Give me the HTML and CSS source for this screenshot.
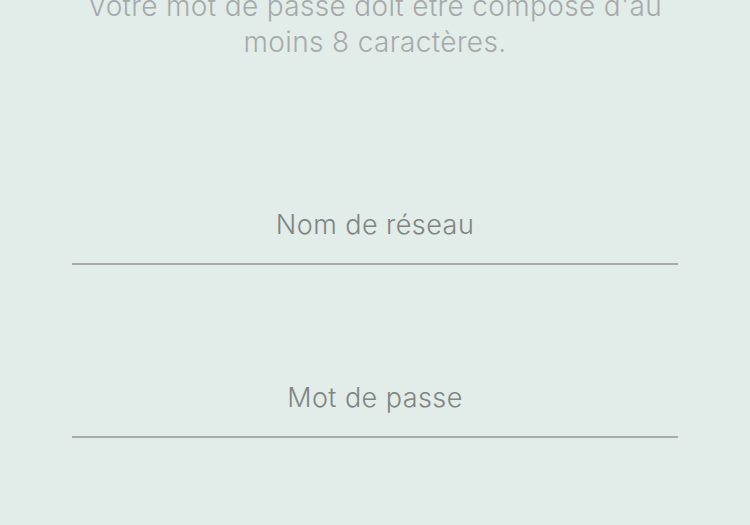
FILE: index.html
```html
<!DOCTYPE html>
<html lang="fr">
<head>
<meta charset="utf-8">
<link rel="stylesheet" href="styles.css">
</head>
<body>
<main class="screen">
  <p class="hint">Votre mot de passe doit être composé d'au moins 8 caractères.</p>
  <div class="field field-first"><span class="label">Nom de réseau</span></div>
  <div class="field"><span class="label">Mot de passe</span></div>
</main>
</body>
</html>
```
FILE: styles.css
```css
html, body {
  margin: 0;
  padding: 0;
  background: #e2ece9;
  height: 100%;
  overflow: hidden;
}
.screen {
  display: flex;
  flex-direction: column;
  padding: 0 72px;
  font-family: Inter, Roboto, "Liberation Sans", sans-serif;
  font-weight: 300;
}
.hint {
  margin: -12px 0 0;
  font-size: 28px;
  letter-spacing: 0.35px;
  line-height: 36px;
  color: #a6aaa9;
  text-align: center;
}
.field {
  display: flex;
  justify-content: center;
  border-bottom: 2px solid #a8abaa;
  margin-top: 115px;
  padding-bottom: 20px;
}
.field-first {
  margin-top: 147px;
}
.label {
  font-size: 27px;
  letter-spacing: 0.45px;
  line-height: 36px;
  color: #808583;
}
```
